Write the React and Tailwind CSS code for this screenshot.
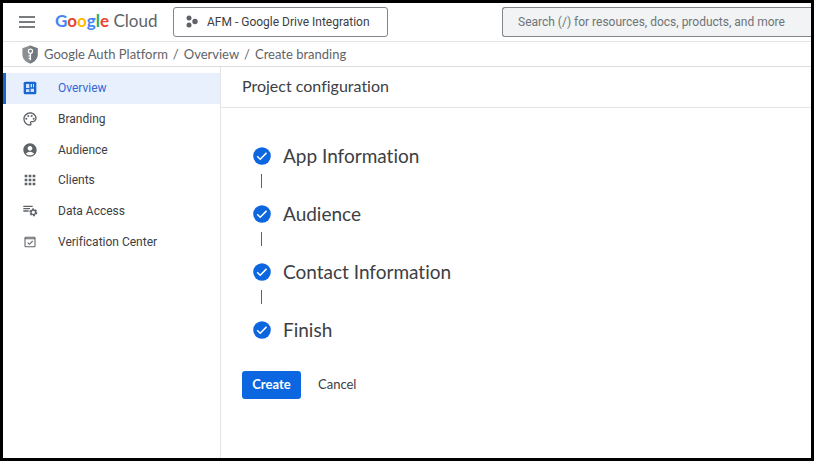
import React from "react";
import { MdOutlinePalette, MdAccountCircle, MdApps } from "react-icons/md";

const icon = "h-4 w-4 shrink-0";

function OverviewIcon() {
  return (
    <svg viewBox="0 0 24 24" className={icon} aria-hidden="true">
      <rect x="2.500" y="2.500" width="19" height="19" rx="2.500" fill="currentColor" />
      <path fill="#d2e3fc" d="M6 6h5v6H6zM6 14h5v4H6zM13 6h2v5h-2zM16.500 6H18v5h-1.500zM13 13h5v5h-5z" />
    </svg>
  );
}

function DataAccessIcon() {
  return (
    <svg viewBox="0 0 24 24" className={icon} fill="none" stroke="currentColor" aria-hidden="true">
      <path strokeWidth="2" d="M2 5h14M2 8.500h10M2 12h8" />
      <circle cx="17" cy="14" r="3.500" strokeWidth="2" />
      <circle cx="17" cy="14" r="5" strokeWidth="2" strokeDasharray="3 2.236" />
    </svg>
  );
}

function VerificationIcon() {
  return (
    <svg viewBox="0 0 24 24" className={icon} fill="none" stroke="currentColor" strokeWidth="1.600" aria-hidden="true">
      <rect x="4.500" y="5" width="15" height="14" rx="1" />
      <path d="M4.500 7h15M8.500 13l2.500 2.500 5-5" />
    </svg>
  );
}

function StepIcon() {
  return (
    <svg viewBox="0 0 18 18" className="h-[18px] w-[18px] shrink-0" aria-hidden="true">
      <circle cx="9" cy="9" r="8.800" fill="#0b66e0" />
      <path d="M4.200 9.300l3 3 6.300-6.400" fill="none" stroke="#fff" strokeWidth="1.500" />
    </svg>
  );
}

function ShieldIcon() {
  return (
    <svg viewBox="0 0 16 20" className="h-[19px] w-4 shrink-0" aria-hidden="true">
      <path fill="#8b8f93" d="M8 0.500l8 3v6.500c0 4.500-3.200 8-8 9.500-4.800-1.500-8-5-8-9.500V3.500z" />
      <path fill="#75797d" d="M8 0.500l8 3v6.500c0 4.500-3.200 8-8 9.500z" />
      <circle cx="8.500" cy="6.500" r="2.200" fill="none" stroke="#fff" strokeWidth="1.300" />
      <path d="M8.500 8.500v7.500M8.500 11.500H6.500M8.500 14H6.500" stroke="#fff" strokeWidth="1.300" />
    </svg>
  );
}

function ProjectIcon() {
  return (
    <svg viewBox="0 0 12 13" className="h-[13px] w-3 shrink-0" fill="#5f6368" aria-hidden="true">
      <circle cx="3" cy="3" r="2.500" />
      <circle cx="3" cy="10" r="2.500" />
      <circle cx="9" cy="6.500" r="2.700" />
    </svg>
  );
}

const nav = [
  { label: "Overview", Icon: OverviewIcon, active: true },
  { label: "Branding", Icon: MdOutlinePalette },
  { label: "Audience", Icon: MdAccountCircle },
  { label: "Clients", Icon: MdApps },
  { label: "Data Access", Icon: DataAccessIcon },
  { label: "Verification Center", Icon: VerificationIcon },
];

const steps = ["App Information", "Audience", "Contact Information", "Finish"];

export default function App() {
  return (
    <div className="flex min-h-screen bg-white pr-px pb-px font-['Roboto',sans-serif] text-[#3c4043] [font-variant-ligatures:none]">
      <div className="flex min-w-0 grow flex-col overflow-hidden border-[3px] border-black">
        <header className="flex h-[39px] shrink-0 items-center border-b border-[#e3e4e6] pb-px pl-4">
          <button type="button" aria-label="Main menu" className="flex h-6 w-4 shrink-0 flex-col justify-center gap-[3px]">
            <span className="h-[2px] w-full bg-[#7a7d80]" />
            <span className="h-[2px] w-full bg-[#7a7d80]" />
            <span className="h-[2px] w-full bg-[#7a7d80]" />
          </button>
          <a href="#home" className="ml-5 w-[100px] shrink-0 pb-[2px] font-['Lato',sans-serif] text-[17px] leading-5 whitespace-nowrap text-[#5f6368]">
            <span className="font-bold">
              <span className="text-[#4285f4]">G</span>
              <span className="text-[#ea4335]">o</span>
              <span className="text-[#fbbc04]">o</span>
              <span className="text-[#4285f4]">g</span>
              <span className="text-[#34a853]">l</span>
              <span className="text-[#ea4335]">e</span>
            </span>{" "}
            Cloud
          </a>
          <button type="button" className="ml-[18px] flex h-[30px] w-[215px] shrink-0 items-center gap-[9px] rounded-[3px] border border-[#80868b] pl-3 text-[12px] whitespace-nowrap">
            <ProjectIcon />
            AFM - Google Drive Integration
          </button>
          <input
            type="search"
            aria-label="Search"
            placeholder="Search (/) for resources, docs, products, and more"
            className="ml-[114px] h-[30px] min-w-0 grow rounded-l-[3px] border border-r-0 border-[#80868b] bg-[#f1f3f4] pl-[15px] text-[12px] placeholder:text-[#6f7377]"
          />
        </header>
        <nav aria-label="Breadcrumb" className="flex h-[25px] shrink-0 items-center border-b border-[#dadce0] pl-[19px] font-['Lato',sans-serif] text-[13px] whitespace-nowrap text-[#5f6368]">
          <ShieldIcon />
          <div className="flex gap-[5px] pt-[2px] pl-[6px]">
            <a href="#platform">Google Auth Platform</a>
            <span>/</span>
            <a href="#overview">Overview</a>
            <span>/</span>
            <a href="#branding">Create branding</a>
          </div>
        </nav>
        <div className="flex grow">
          <nav aria-label="Sections" className="w-[218px] shrink-0 border-r border-[#e3e4e6] pt-[6px]">
            <div className="grid h-[184px] auto-rows-fr">
              {nav.map(({ label, Icon, active }) => (
                <a
                  key={label}
                  href={"#" + label}
                  className={
                    active
                      ? "flex items-center gap-5 border-l-[3px] border-[#1967d2] bg-[#e8f0fe] pl-4 text-[12px] text-[#3367d6]"
                      : "flex items-center gap-5 border-l-[3px] border-transparent pl-4 text-[12px]"
                  }
                >
                  <span className={active ? "text-[#1967d2]" : "text-[#5f6368]"}>
                    <Icon className={icon} />
                  </span>
                  {label}
                </a>
              ))}
            </div>
          </nav>
          <main className="min-w-0 grow font-['Lato',sans-serif]">
            <h1 className="flex h-[41px] items-center border-b border-[#e3e4e6] pb-[2px] pl-[21px] text-[16px]">Project configuration</h1>
            <ol className="pt-9 pl-8">
              {steps.map((step, i) => (
                <li key={step}>
                  <div className="flex h-6 items-center gap-3 text-[19px] leading-6">
                    <StepIcon />
                    <span className="pb-px">{step}</span>
                  </div>
                  {i < steps.length - 1 && <div className="mt-[6px] mb-[14px] ml-2 h-[14px] w-px bg-[#5f6368]" />}
                </li>
              ))}
            </ol>
            <div className="mt-[29px] flex gap-[17px] pl-[21px] text-[13px]">
              <button type="button" className="h-7 w-[59px] rounded-[3px] bg-[#0b66e0] font-bold text-white">Create</button>
              <button type="button" className="h-7">Cancel</button>
            </div>
          </main>
        </div>
      </div>
    </div>
  );
}
